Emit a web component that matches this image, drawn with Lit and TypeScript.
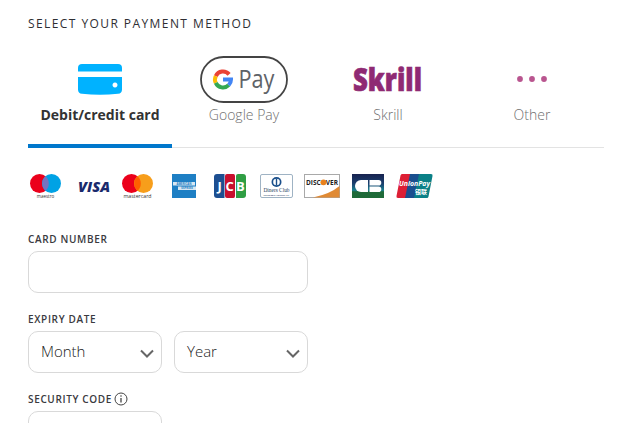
import { LitElement, html, css, unsafeCSS } from "lit";
import { customElement } from "lit/decorators.js";

const F = unsafeCSS("'Open Sans','Noto Sans',sans-serif");

const cardIcon = html`<svg width="44" height="32" viewBox="0 0 44 32"><path d="M0 5Q0 1 4 1H40Q44 1 44 5V8.500H0Z" fill="#00b2ff"/><path d="M0 14H44V26.500Q44 30.500 40 30.800Q22 32.500 4 30.800Q0 30.500 0 26.500ZM37 19.500a2.500 2.500 0 1 0 0.010 0Z" fill="#00b2ff" fill-rule="evenodd"/></svg>`;

const gpay = html`<svg width="88" height="47" viewBox="1 0 88 47">
  <rect x="2" y="1" width="86" height="45" rx="22.500" fill="#fff" stroke="#444" stroke-width="1.800"/>
  <g fill="none" stroke-width="4">
    <path d="M30.100 18.400A8 8 0 0 0 16.750 20.100" stroke="#ea4335"/>
    <path d="M16.750 20.100A8 8 0 0 0 16.750 26.900" stroke="#fbbc04"/>
    <path d="M16.750 26.900A8 8 0 0 0 29.660 29.160" stroke="#34a853"/>
    <path d="M24 23.500H32A8 8 0 0 1 29.660 29.160" stroke="#4285f4"/>
  </g>
  <text x="39.500" y="32" class="pay" textLength="36" lengthAdjust="spacingAndGlyphs">Pay</text>
</svg>`;

const skrill = html`<svg width="72" height="28" viewBox="0 0 72 28"><text x="1" y="26" class="skr" textLength="69" lengthAdjust="spacingAndGlyphs">Skrill</text></svg>`;

const dots = html`<svg width="32" height="6" viewBox="0 0 32 6"><circle cx="4" cy="3" r="2.900" fill="#b9558f"/><circle cx="16" cy="3" r="2.900" fill="#b9558f"/><circle cx="28" cy="3" r="2.900" fill="#b9558f"/></svg>`;

const overlap = "M15.500 2.300a9.500 9.500 0 0 1 0 14.400a9.500 9.500 0 0 1 0-14.400Z";
const maestro = html`<svg width="31" height="24" viewBox="0 0 31 24"><circle cx="9.500" cy="9.500" r="9.500" fill="#eb001b"/><circle cx="21.500" cy="9.500" r="9.500" fill="#00a2e5"/><path d="${overlap}" fill="#7673c0"/><text x="15.500" y="23.500" class="tiny" text-anchor="middle">maestro</text></svg>`;
const visa = html`<svg width="32" height="12" viewBox="0 0 32 12"><text x="0" y="11.500" class="visa" textLength="32" lengthAdjust="spacingAndGlyphs">VISA</text></svg>`;
const mc = html`<svg width="31" height="24" viewBox="0 0 31 24"><circle cx="9.500" cy="9.500" r="9.500" fill="#eb001b"/><circle cx="21.500" cy="9.500" r="9.500" fill="#f79e1b"/><path d="${overlap}" fill="#ff5f00"/><text x="15.500" y="23.500" class="tiny" text-anchor="middle" textLength="28" lengthAdjust="spacingAndGlyphs">mastercard</text></svg>`;
const amex = html`<svg width="24" height="24" viewBox="0 0 24 24"><rect width="24" height="24" fill="#1e7fc4"/><rect x="1" y="8" width="22" height="3.500" fill="#d7e7f3"/><rect x="6" y="12.500" width="18" height="3.500" fill="#d7e7f3"/><text x="12" y="10.800" class="amx" text-anchor="middle">AMERICAN</text><text x="15" y="15.300" class="amx" text-anchor="middle">EXPRESS</text></svg>`;
const jcb = html`<svg width="32" height="24" viewBox="0 0 32 24">
  <path d="M3 0H10.500V24H3Q0 24 0 21V3Q0 0 3 0Z" fill="#1d4f91"/>
  <path d="M13 0H19.500Q21 0 21 2V22Q21 24 19.500 24H13Q11 24 11 22V2Q11 0 13 0Z" fill="#c8102e"/>
  <path d="M24 0H29Q32 0 32 3V21Q32 24 29 24H22V2Q22 0 24 0Z" fill="#2f9e44"/>
  <text x="3.500" y="17" class="jcb">J</text><text x="11.500" y="17" class="jcb">C</text><text x="22" y="17" class="jcb">B</text></svg>`;
const diners = html`<svg width="33" height="24" viewBox="0 0 33 24"><rect x=".5" y=".5" width="32" height="23" rx="1.500" fill="#fff" stroke="#9fb3c4"/><circle cx="16.500" cy="8" r="5" fill="#1a4f8b"/><circle cx="16.500" cy="8" r="3.300" fill="#fff"/><rect x="15.800" y="4.500" width="1.400" height="7" fill="#1a4f8b"/><text x="16.500" y="18" class="din" text-anchor="middle" textLength="26" lengthAdjust="spacingAndGlyphs">Diners Club</text><text x="16.500" y="21.800" class="din2" text-anchor="middle" textLength="26" lengthAdjust="spacingAndGlyphs">INTERNATIONAL</text></svg>`;
const discover = html`<svg width="36" height="24" viewBox="0 0 36 24"><rect x=".5" y=".5" width="35" height="23" fill="#fff" stroke="#a9a9a9"/><path d="M9 23.500Q26 20 35.500 12V23.500Z" fill="#e08a34"/><text x="2" y="11" class="disc" textLength="32" lengthAdjust="spacingAndGlyphs">DISCOVER</text><circle cx="19.500" cy="8.300" r="2.900" fill="#e8811e"/></svg>`;
const cb = html`<svg width="32" height="24" viewBox="0 0 32 24"><defs><linearGradient id="cbg" x1="0" y1="0" x2="0" y2="1"><stop offset="0" stop-color="#17224f"/><stop offset=".4" stop-color="#1b3f6e"/><stop offset=".68" stop-color="#1a7f8e"/><stop offset=".74" stop-color="#1f6a3a"/><stop offset="1" stop-color="#1e6b38"/></linearGradient></defs><rect width="32" height="24" fill="url(#cbg)"/><path d="M16 6H9a6 6 0 0 0 0 12H16Z" fill="#fff"/><path d="M17.500 6H26.500a2.800 2.800 0 0 1 0 5.600H17.500ZM17.500 12.400H26.500a2.800 2.800 0 0 1 0 5.600H17.500Z" fill="#fff"/></svg>`;
const union = html`<svg width="37" height="24" viewBox="0 0 37 24">
  <path d="M6 0H16L11 24H2Q0 24 .5 22L4.500 1.500Q4.800 0 6 0Z" fill="#dd1f35"/>
  <path d="M14 0H25L20 24H9Z" fill="#1a4f8f"/>
  <path d="M23 0H35Q37 0 36.500 2L32.500 22.500Q32.200 24 31 24H18Z" fill="#0b8087"/>
  <text x="3" y="12" class="up" textLength="31" lengthAdjust="spacingAndGlyphs">UnionPay</text>
  <text x="25" y="19.500" class="up2" text-anchor="middle">银联</text></svg>`;

const tabs = [
  { label: "Debit/credit card", icon: cardIcon, active: true },
  { label: "Google Pay", icon: gpay, active: false },
  { label: "Skrill", icon: skrill, active: false },
  { label: "Other", icon: dots, active: false },
];

const logos = [
  { svg: maestro, gap: 17 },
  { svg: visa, gap: 12 },
  { svg: mc, gap: 19 },
  { svg: amex, gap: 18 },
  { svg: jcb, gap: 14 },
  { svg: diners, gap: 11 },
  { svg: discover, gap: 12 },
  { svg: cb, gap: 12 },
  { svg: union, gap: 0 },
];

@customElement("app-root")
export class AppRoot extends LitElement {
  static styles = css`
    :host { display: block; height: 423px; overflow: hidden; background: #fff; font-family: ${F}; color: #333; }
    .page { padding: 15px 15px 0 28px; }
    h1 { margin: 0; font-size: 12px; line-height: 17px; font-weight: 400; letter-spacing: 1.420px; color: #2e2e33; text-transform: uppercase; }
    .tabs { display: grid; grid-template-columns: repeat(4, 144px); border-bottom: 1px solid #e3e3e3; margin-top: 15px; }
    .tab { height: 100px; display: flex; flex-direction: column; align-items: center; font-size: 14px; line-height: 20px; font-weight: 300; color: #6f6f6f; position: relative; box-sizing: border-box; }
    .tab.active { color: #333; font-weight: 700; }
    .tab.active::after { content: ""; position: absolute; left: 0; right: 0; bottom: -1px; height: 4px; background: #0077cc; }
    .ico { box-sizing: border-box; height: 58px; padding-top: 6px; display: flex; align-items: center; justify-content: center; }
    svg { display: block; overflow: visible; }
    .pay { font: 400 25px ${F}; fill: #5f6368; }
    .skr { font: 800 32px ${F}; fill: #8f2a73; stroke: #8f2a73; stroke-width: .7px; }
    .tiny { font: 400 4.500px ${F}; fill: #333; }
    .visa { font: italic 800 14.500px ${F}; fill: #1a2a6c; }
    .amx { font: 700 2.800px ${F}; fill: #1e7fc4; }
    .jcb { font: 700 13px ${F}; fill: #fff; }
    .din { font: 400 6px "Liberation Serif", serif; fill: #26405c; }
    .din2 { font: 700 2.800px "Liberation Serif", serif; fill: #26405c; }
    .disc { font: 700 7.500px ${F}; fill: #222; }
    .up { font: italic 700 7.500px ${F}; fill: #fff; }
    .up2 { font: 700 6px "Noto Sans CJK SC", sans-serif; fill: #fff; }
    .cards { display: flex; align-items: center; height: 24px; margin-top: 26px; padding-left: 2px; }
    .lbl { font-size: 10px; line-height: 14px; font-weight: 600; letter-spacing: .65px; color: #3a3a40; text-transform: uppercase; display: flex; align-items: center; gap: 2px; }
    .box { box-sizing: border-box; height: 42px; border: 1px solid #d9d9d9; border-radius: 10px; background: #fff; margin-top: 5px; display: flex; align-items: center; justify-content: space-between; font-size: 15px; font-weight: 300; color: #222; padding: 0 7px 0 12px; }
    .txt { margin-bottom: 2px; }
    .chev { margin-top: 2px; }
    .w280 { width: 280px; }
    .w134 { width: 134px; }
    .row { display: flex; gap: 12px; }
    .f1 { margin-top: 34px; }
    .f2, .f3 { margin-top: 19px; }
  `;

  render() {
    return html`<div class="page">
      <h1>Select your payment method</h1>
      <div class="tabs">
        ${tabs.map((t) => html`<div class="tab ${t.active ? "active" : ""}"><div class="ico">${t.icon}</div><div>${t.label}</div></div>`)}
      </div>
      <div class="cards">
        ${logos.map((l) => html`<div style="margin-right:${l.gap}px">${l.svg}</div>`)}
      </div>
      <div class="f1"><div class="lbl">Card number</div><div class="box w280"></div></div>
      <div class="f2"><div class="lbl">Expiry date</div>
        <div class="row">
          <div class="box w134"><span class="txt">Month</span>${this.chev()}</div>
          <div class="box w134"><span class="txt">Year</span>${this.chev()}</div>
        </div>
      </div>
      <div class="f3"><div class="lbl">Security code
        <svg width="14" height="14" viewBox="0 0 14 14" fill="none" stroke="#444"><circle cx="7" cy="7" r="6"/><path d="M7 6V10.500" stroke-width="1.300"/><circle cx="7" cy="4" r=".8" fill="#444" stroke="none"/></svg></div>
        <div class="box w134"></div></div>
    </div>`;
  }

  chev() {
    return html`<svg class="chev" width="14" height="9" viewBox="0 0 14 9" fill="none" stroke="#666" stroke-width="2"><path d="M1 1.500L7 7.500L13 1.500"/></svg>`;
  }
}
